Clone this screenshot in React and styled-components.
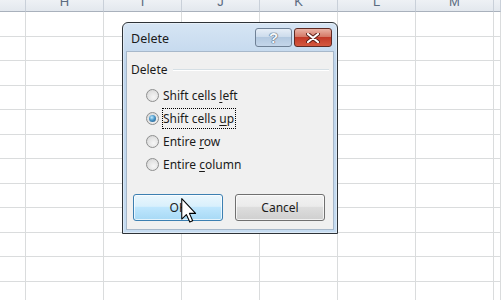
import React from 'react'
import styled, { createGlobalStyle } from 'styled-components'

const GlobalStyle = createGlobalStyle`
    html, body {
        margin: 0;
        padding: 0;
        background: #ffffff;
        overflow: hidden;
    }
`

const columns = ['', 'H', 'I', 'J', 'K', 'L', 'M', '']
const rowCount = 12

const options = [
    { before: 'Shift cells ', key: 'l', after: 'eft' },
    { before: 'Shift cells ', key: 'u', after: 'p', checked: true },
    { before: 'Entire ', key: 'r', after: 'ow' },
    { before: 'Entire ', key: 'c', after: 'olumn' },
]

export default function App() {
    return (
        <>
            <GlobalStyle />
            <Sheet>
                <Grid>
                    {columns.map((c, i) => (
                        <HeadCell key={'h' + i}><span>{c}</span></HeadCell>
                    ))}
                    {Array.from({ length: rowCount }).map((_, r) =>
                        columns.map((_, i) => <Cell key={r + '-' + i} />)
                    )}
                </Grid>

                <Window>
                    <TitleBar>
                        <Title>Delete</Title>
                        <Controls>
                            <HelpButton>?</HelpButton>
                            <CloseButton>
                                <svg width="14" height="10" viewBox="0 0 14 10">
                                    <path d="M2 1 L12 9 M12 1 L2 9" stroke="#5a1f18" strokeWidth="4" strokeLinecap="round" />
                                    <path d="M2 1 L12 9 M12 1 L2 9" stroke="#ffffff" strokeWidth="2.2" strokeLinecap="round" />
                                </svg>
                            </CloseButton>
                        </Controls>
                    </TitleBar>
                    <Frame>
                        <Client>
                            <GroupHeader>
                                <GroupLabel>Delete</GroupLabel>
                                <GroupLine />
                            </GroupHeader>
                            <RadioList>
                                {options.map((o, i) => (
                                    <RadioRow key={i}>
                                        <Radio checked={o.checked} />
                                        <RadioLabel focused={o.checked}>
                                            {o.before}<u>{o.key}</u>{o.after}
                                        </RadioLabel>
                                    </RadioRow>
                                ))}
                            </RadioList>
                            <ButtonRow>
                                <Button primary>OK</Button>
                                <Button>Cancel</Button>
                            </ButtonRow>
                        </Client>
                    </Frame>
                </Window>

                <Cursor width="16" height="25" viewBox="0 0 12 19">
                    <path d="M0.5 0.5 L0.5 16 L4 12.6 L6.6 18.3 L8.8 17.3 L6.3 11.7 L11 11.7 Z"
                        fill="#ffffff" stroke="#000000" strokeWidth="0.8" strokeLinejoin="round" />
                </Cursor>
            </Sheet>
        </>
    )
}

const Sheet = styled.div`
    position: relative;
    width: 501px;
    height: 300px;
    overflow: hidden;
    font-family: "Noto Sans", "Open Sans", sans-serif;
`

const Grid = styled.div`
    display: grid;
    grid-template-columns: 26px repeat(6, 78px) 1fr;
    grid-auto-rows: 24.5px;
    grid-template-rows: 12px;
`

const HeadCell = styled.div`
    box-sizing: border-box;
    display: flex;
    align-items: flex-end;
    justify-content: center;
    overflow: hidden;
    background: linear-gradient(#eef1f5, #e3e8ee);
    border-right: 1px solid #c9d0d9;
    border-bottom: 1px solid #a9b1bc;
    color: #5b6b80;
    font-family: "Liberation Sans", Arial, sans-serif;
    font-size: 13px;
    span {
        line-height: 13px;
        margin-bottom: 3px;
    }
`

const Cell = styled.div`
    box-sizing: border-box;
    border-right: 1px solid #dadcdd;
    border-bottom: 1px solid #dadcdd;
`

const Window = styled.div`
    position: absolute;
    left: 122px;
    top: 22px;
    width: 216px;
    height: 212px;
    box-sizing: border-box;
    display: flex;
    flex-direction: column;
    border: 1px solid #2e3338;
    border-radius: 6px 6px 0 0;
    background: linear-gradient(#d6e5f4, #bfd5ec 20%, #c6dcf1);
    box-shadow: 0 0 0 1px rgba(255, 255, 255, 0.4) inset;
`

const TitleBar = styled.div`
    height: 28px;
    display: flex;
    justify-content: space-between;
    align-items: flex-start;
    padding: 0 5px 0 8px;
`

const Title = styled.div`
    margin-top: 8px;
    font-size: 12.5px;
    color: #1b1b1b;
    line-height: 16px;
`

const Controls = styled.div`
    display: flex;
    gap: 2px;
    margin-top: 5px;
`

const HelpButton = styled.div`
    width: 37px;
    height: 19px;
    box-sizing: border-box;
    border: 1px solid #6f8196;
    border-radius: 3px;
    background: linear-gradient(#e6eef7, #cddcec 45%, #b3c9e0 50%, #c4d6ea);
    display: flex;
    align-items: center;
    justify-content: center;
    font-family: "Liberation Sans", Arial, sans-serif;
    font-weight: bold;
    font-size: 15px;
    color: #f4f7fb;
    text-shadow: 0 0 1px #4d5e72, 0 0 1px #4d5e72, 0 0 1px #4d5e72;
`

const CloseButton = styled.div`
    width: 38px;
    height: 19px;
    box-sizing: border-box;
    border: 1px solid #5e2a23;
    border-radius: 3px;
    background: linear-gradient(#eab3a5, #d57a68 45%, #c23a28 50%, #d4583f);
    display: flex;
    align-items: center;
    justify-content: center;
`

const Frame = styled.div`
    flex: 1;
    display: flex;
    padding: 0 3px 3px;
`

const Client = styled.div`
    flex: 1;
    display: flex;
    flex-direction: column;
    background: #f0f0f0;
    border: 1px solid #a7b8ca;
    padding: 10px 0 0 4px;
`

const GroupHeader = styled.div`
    display: flex;
    align-items: center;
    gap: 5px;
    padding-right: 4px;
`

const GroupLabel = styled.div`
    font-size: 12px;
    line-height: 16px;
    color: #1b1b1b;
`

const GroupLine = styled.div`
    flex: 1;
    height: 0;
    border-top: 1px solid #d5dfe5;
    border-bottom: 1px solid #ffffff;
`

const RadioList = styled.div`
    display: flex;
    flex-direction: column;
    margin-top: 6px;
    padding-left: 15px;
`

const RadioRow = styled.div`
    height: 23px;
    display: flex;
    align-items: center;
    gap: 3px;
`

const Radio = styled.div`
    position: relative;
    width: 13px;
    height: 13px;
    box-sizing: border-box;
    border-radius: 50%;
    border: 1px solid #8e8f8f;
    background: radial-gradient(circle at 60% 65%, #f6f6f6 0, #e3e3e3 55%, #cfcfcf 100%);
    &::after {
        content: '';
        display: ${({ checked }) => (checked ? 'block' : 'none')};
        position: absolute;
        left: 2px;
        top: 2px;
        width: 7px;
        height: 7px;
        border-radius: 50%;
        background: radial-gradient(circle at 40% 35%, #c4ecff 0, #4a97c9 45%, #1d4e7c 100%);
    }
`

const RadioLabel = styled.div`
    font-size: 12px;
    line-height: 17px;
    color: #1b1b1b;
    padding: 1px 1px 1px 0;
    border: 1px dotted ${({ focused }) => (focused ? '#000000' : 'transparent')};
    u {
        text-underline-offset: 2px;
    }
`

const ButtonRow = styled.div`
    display: flex;
    gap: 12px;
    margin-top: 18px;
    padding-left: 2px;
`

const Button = styled.div`
    width: 90px;
    height: 27px;
    box-sizing: border-box;
    display: flex;
    align-items: center;
    justify-content: center;
    border-radius: 3px;
    font-size: 12px;
    color: #1b1b1b;
    border: 1px solid ${({ primary }) => (primary ? '#3c7fb1' : '#707070')};
    background: ${({ primary }) =>
        primary
            ? 'linear-gradient(#eaf6fd, #d9f0fc 45%, #bee6fd 50%, #a7d9f5)'
            : 'linear-gradient(#f2f2f2, #ebebeb 45%, #dddddd 50%, #cfcfcf)'};
    box-shadow: inset 0 0 0 1px rgba(255, 255, 255, 0.7);
`

const Cursor = styled.svg`
    position: absolute;
    left: 181px;
    top: 198px;
`
